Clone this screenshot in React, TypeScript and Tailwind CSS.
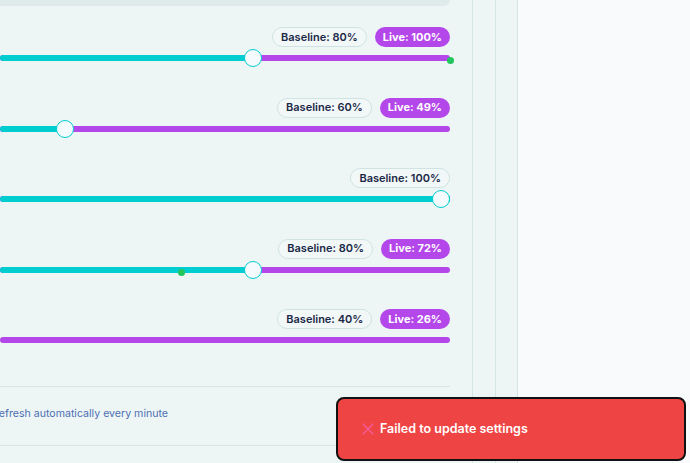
import React from "react";

type Row = {
    baseline: number;
    live?: number;
    thumb?: number; // px from left of track
    split: number; // px where teal ends
    dot?: number; // px of the green marker
};

const rows: Row[] = [
    { baseline: 80, live: 100, thumb: 253, split: 253, dot: 450 },
    { baseline: 60, live: 49, thumb: 65, split: 65 },
    { baseline: 100, thumb: 441, split: 450 },
    { baseline: 80, live: 72, thumb: 253, split: 253, dot: 181 },
    { baseline: 40, live: 26, split: 0 },
];

function SliderRow({ row }: { row: Row }) {
    return (
        <div className="flex flex-col">
            {/* Badges */}
            <div className="flex justify-end gap-2 h-5">
                <span className="flex items-center px-[8px] rounded-full border border-[#cfe3e3] bg-[#f2f8f8] text-[11px] font-semibold text-[#1b2847]">
                    Baseline: {row.baseline}%
                </span>
                {row.live !== undefined && (
                    <span className="flex items-center px-[8px] rounded-full bg-[#b447e9] text-[11px] font-bold text-white">
                        Live: {row.live}%
                    </span>
                )}
            </div>

            {/* Track */}
            <div className="relative h-[18px] mt-[2px]">
                <div className="absolute left-0 right-0 top-[6px] h-[6px] rounded-full bg-[#b447e9]" />
                {row.split > 0 && (
                    <div
                        className="absolute left-0 top-[6px] h-[6px] rounded-l-full bg-[#00cdd0]"
                        style={{ width: row.split }}
                    />
                )}
                {row.dot !== undefined && (
                    <div
                        className="absolute top-[8px] w-[7px] h-[7px] rounded-full bg-[#22c55e]"
                        style={{ left: row.dot - 3.5 }}
                    />
                )}
                {row.thumb !== undefined && (
                    <div
                        className="absolute top-0 w-[18px] h-[18px] rounded-full bg-[#f5fbfd] border-[1.5px] border-[#00cdd0]"
                        style={{ left: row.thumb - 9 }}
                    />
                )}
            </div>
        </div>
    );
}

export default function App() {
    return (
        <div
            className="relative flex h-[463px] w-[690px] overflow-hidden"
            style={{ fontFamily: "Inter, 'Noto Sans', sans-serif" }}
        >
            <div className="flex h-full bg-[#eef6f5]">
                {/* Main panel */}
                <div className="w-[473px] h-full border-r border-[#d3e5e5] pr-[22px]">
                    <div className="h-[6px] w-[450px] rounded-br-[12px] bg-[#dfeaea]" />

                    <div className="flex flex-col gap-[30.5px] mt-[21px]">
                        {rows.map((row, i) => (
                            <SliderRow key={i} row={row} />
                        ))}
                    </div>

                    <div className="mt-[37px] border-t border-[#d3e5e5] h-[59px] pb-[4px] flex items-center">
                        <p className="-ml-[5px] text-[10.6px] text-[#4d6fb3] whitespace-nowrap">
                            refresh automatically every minute
                        </p>
                    </div>
                    <div className="border-t border-[#d3e5e5] -mr-[20px]" />
                </div>
                <div className="w-[23px] h-full border-r border-[#d3e5e5]" />
                <div className="w-[22px] h-full border-r border-[#d3e5e5]" />
            </div>
            <div className="flex-1 bg-[#f8fafc]" />

            {/* Toast */}
            <div className="absolute left-[336px] top-[397px] w-[350px] h-[64px] rounded-[8px] border-2 border-[#111] bg-[#ef4444] flex items-center pl-[24px] gap-[6px]">
                <svg width="12" height="12" viewBox="0 0 12 12" fill="none">
                    <path
                        d="M1 1L11 11M11 1L1 11"
                        stroke="#f25a9a"
                        strokeWidth="1.4"
                        strokeLinecap="round"
                    />
                </svg>
                <span className="text-[12.5px] font-semibold text-white">
                    Failed to update settings
                </span>
            </div>
        </div>
    );
}
